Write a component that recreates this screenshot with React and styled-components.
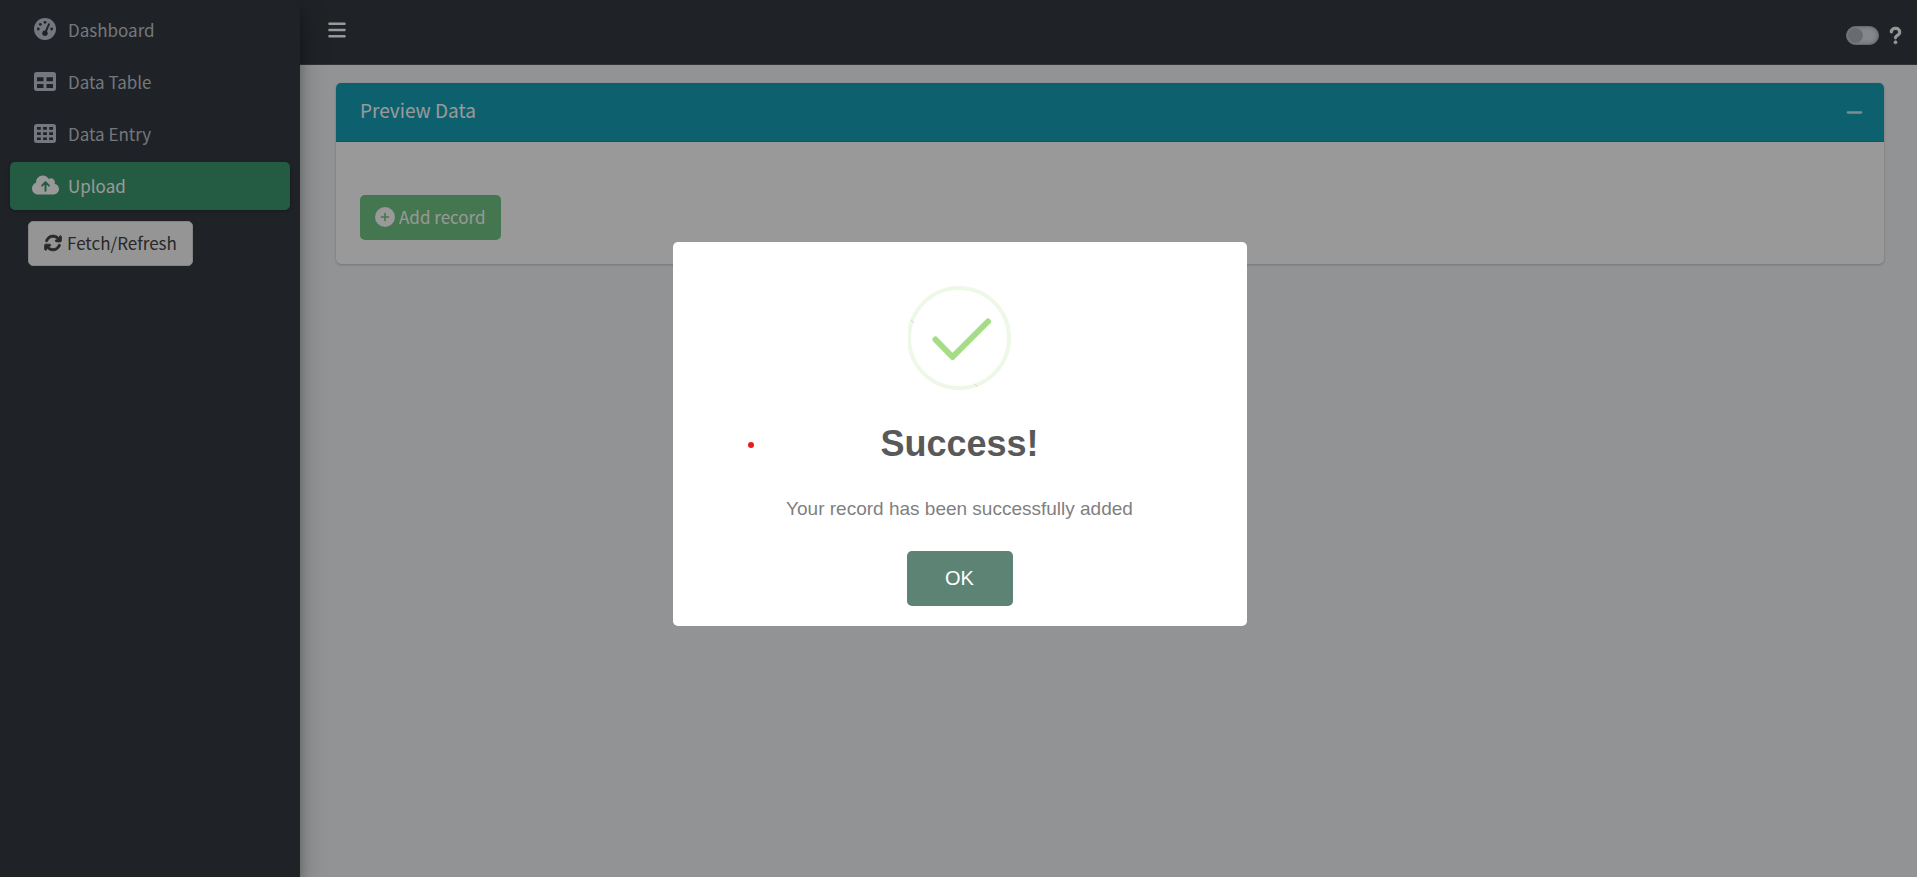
import React from 'react';
import styled, { createGlobalStyle, css } from 'styled-components';
import { FaArrowsRotate, FaBars, FaQuestion, FaMinus } from 'react-icons/fa6';

const GlobalStyle = createGlobalStyle`
  *, *::before, *::after { box-sizing: border-box; }
  body {
    margin: 0;
    background: #f4f6f9;
    color: #212529;
    font-family: "Source Sans Pro", "Noto Sans CJK SC", sans-serif;
    font-size: 17px;
    line-height: 28px;
  }
  button { font: inherit; cursor: pointer; }
  svg { display: block; flex: none; }
`;

const Shell = styled.div`
  display: flex;
  min-height: 100vh;
`;

const Sidebar = styled.aside`
  flex: 0 0 300px;
  z-index: 1;
  padding: 6px 10px;
  background: #343a40;
  box-shadow: 0 14px 28px rgba(0, 0, 0, 0.25), 0 10px 10px rgba(0, 0, 0, 0.22);
`;

const NavList = styled.ul`
  display: flex;
  flex-direction: column;
  gap: 4px;
  margin: 0 0 11px;
  padding: 0;
  list-style: none;
`;

const NavLink = styled.a`
  display: flex;
  align-items: center;
  gap: 7px;
  height: 48px;
  padding: 0 19px;
  border-radius: 5px;
  color: #c2c7d0;
  text-decoration: none;
  ${({ $active }) =>
    $active &&
    css`
      background: #3d9970;
      color: #fff;
      box-shadow: 0 1px 4px rgba(0, 0, 0, 0.24);
    `}
`;

const NavIcon = styled.span`
  display: flex;
  justify-content: center;
  width: 32px;
  padding-bottom: 2px;
`;

const Button = styled.button`
  display: inline-flex;
  align-items: center;
  gap: 4px;
  height: 45px;
  padding: 0 14px 2px;
  border: 1px solid transparent;
  border-radius: 5px;
`;

const RefreshButton = styled(Button)`
  gap: 5px;
  margin-left: 18px;
  padding: 0 15px 2px;
  border-color: #ddd;
  background: #f8f9fa;
  color: #444;
`;

const AddButton = styled(Button)`
  background: #28a745;
  color: #fff;
  opacity: 0.65;
`;

const Content = styled.div`
  flex: 1;
  min-width: 0;
`;

const TopBar = styled.header`
  display: flex;
  align-items: center;
  justify-content: space-between;
  height: 65px;
  padding: 0 12px 0 27px;
  border-bottom: 1px solid #4b545c;
  background: #343a40;
`;

const IconButton = styled.button`
  display: flex;
  padding: 0;
  border: 0;
  background: none;
  color: ${({ $color }) => $color || '#fff'};
`;

const MenuButton = styled(IconButton)`
  margin-bottom: 5px;
`;

const TopTools = styled.div`
  display: flex;
  align-items: center;
  gap: 7px;
  padding-top: 6px;
`;

const Switch = styled.input`
  appearance: none;
  display: flex;
  align-items: center;
  width: 33px;
  height: 19px;
  margin: 0;
  padding: 1px;
  border: 1px solid #adb5bd;
  border-radius: 10px;
  background: #dee2e6;
  box-shadow: inset 0 0 4px rgba(0, 0, 0, 0.25);

  &::before {
    content: '';
    width: 15px;
    height: 15px;
    border-radius: 50%;
    background: #adb5bd;
  }
`;

const Main = styled.main`
  padding: 18px 33px 18px 36px;
`;

const Card = styled.section`
  border-radius: 5px;
  background: #fff;
  box-shadow: 0 0 1px rgba(0, 0, 0, 0.125), 0 1px 3px rgba(0, 0, 0, 0.2);
`;

const CardHeader = styled.div`
  display: flex;
  align-items: center;
  justify-content: space-between;
  height: 59px;
  padding: 0 20px 0 24px;
  border-bottom: 1px solid #1591a5;
  border-radius: 5px 5px 0 0;
  background: #17a2b8;
  color: #fff;
`;

const CardTitle = styled.h3`
  margin: 0;
  padding-bottom: 4px;
  font-size: 19px;
  font-weight: 400;
`;

const CardBody = styled.div`
  display: flex;
  padding: 53px 24px 24px;
`;

const Backdrop = styled.div`
  position: fixed;
  inset: 0;
  z-index: 10;
  display: flex;
  align-items: center;
  justify-content: center;
  padding: 0 0 10px 2px;
  background: rgba(0, 0, 0, 0.4);
`;

const Dialog = styled.div`
  position: relative;
  display: flex;
  flex-direction: column;
  align-items: center;
  width: 574px;
  max-width: 100%;
  padding: 44px 20px 20px;
  border-radius: 5px;
  background: #fff;
  font-family: "Liberation Sans", Arial, sans-serif;
`;

const DialogTitle = styled.h2`
  margin: 32px 0 0;
  color: #595959;
  font-size: 36px;
  font-weight: 700;
  line-height: 44px;
`;

const DialogText = styled.p`
  margin: 32px 0 0;
  color: #7f7f7f;
  font-size: 19px;
  line-height: 22px;
`;

const ConfirmButton = styled.button`
  width: 106px;
  height: 55px;
  margin-top: 31px;
  border: 0;
  border-radius: 5px;
  background: #5c8374;
  color: #fff;
  font-size: 20px;
`;

const PointerDot = styled.span`
  position: absolute;
  top: 200px;
  left: 75px;
  width: 6px;
  height: 6px;
  border-radius: 50%;
  background: #e81c1c;
`;

function GaugeIcon() {
  return (
    <svg width="22" height="22" viewBox="0 0 22 22" aria-hidden="true">
      <circle cx="11" cy="11" r="11" fill="currentColor" />
      <g fill="#343a40">
        <circle cx="4.300" cy="11" r="1.400" />
        <circle cx="6.300" cy="6.300" r="1.400" />
        <circle cx="11" cy="4.300" r="1.400" />
        <circle cx="17.700" cy="11" r="1.400" />
        <circle cx="11" cy="15.200" r="2.700" />
      </g>
      <path d="M15 6.200L11.400 14.500" stroke="#343a40" strokeWidth="1.900" strokeLinecap="round" />
    </svg>
  );
}

function TableIcon() {
  return (
    <svg width="22" height="19" viewBox="0 0 22 19" fill="currentColor" aria-hidden="true">
      <path
        fillRule="evenodd"
        d="M2.750 0h16.500A2.750 2.750 0 0 1 22 2.750v13.500A2.750 2.750 0 0 1 19.250 19H2.750A2.750 2.750 0 0 1 0 16.250V2.750A2.750 2.750 0 0 1 2.750 0z
           M3 5.200v4h6.500v-4z M12.500 5.200v4H19v-4z M3 12v4h6.500v-4z M12.500 12v4H19v-4z"
      />
    </svg>
  );
}

function GridIcon() {
  return (
    <svg width="22" height="19" viewBox="0 0 22 19" fill="currentColor" aria-hidden="true">
      <path
        fillRule="evenodd"
        d="M2.750 0h16.500A2.750 2.750 0 0 1 22 2.750v13.500A2.750 2.750 0 0 1 19.250 19H2.750A2.750 2.750 0 0 1 0 16.250V2.750A2.750 2.750 0 0 1 2.750 0z
           M3 3v2.700h3.800V3z M9.100 3v2.700h3.800V3z M15.200 3v2.700H19V3z
           M3 8.200v2.700h3.800V8.200z M9.100 8.200v2.700h3.800V8.200z M15.200 8.200v2.700H19V8.200z
           M3 13.400v2.700h3.800v-2.700z M9.100 13.400v2.700h3.800v-2.700z M15.200 13.400v2.700H19v-2.700z"
      />
    </svg>
  );
}

function CloudUploadIcon() {
  return (
    <svg width="27" height="22" viewBox="0 0 640 512" aria-hidden="true">
      <path
        fill="currentColor"
        d="M0 336c0 79.500 64.500 144 144 144l368 0c70.700 0 128-57.300 128-128c0-61.900-44-113.600-102.400-125.400c4.100-10.700 6.400-22.400 6.400-34.600c0-53-43-96-96-96c-19.700 0-38.100 6-53.300 16.200C367 64.200 315.300 32 256 32C167.600 32 96 103.600 96 192c0 2.700 .1 5.400 .2 8.100C40.200 219.800 0 273.200 0 336z"
      />
      <path
        d="M320 392V190M238 270l82-82l82 82"
        fill="none"
        stroke="#3d9970"
        strokeWidth="46"
        strokeLinecap="round"
        strokeLinejoin="round"
      />
    </svg>
  );
}

function CirclePlusIcon() {
  return (
    <svg width="20" height="20" viewBox="0 0 20 20" aria-hidden="true">
      <circle cx="10" cy="10" r="10" fill="currentColor" />
      <path d="M10 6.500v7M6.500 10h7" stroke="#28a745" strokeWidth="1.600" strokeLinecap="round" />
    </svg>
  );
}

function SuccessIcon() {
  return (
    <svg width="104" height="104" viewBox="0 0 104 104" fill="none" aria-hidden="true">
      <circle cx="51" cy="52" r="50" stroke="#edf8e7" strokeWidth="4" />
      <path d="M3 34l3 3M67 98l3 3" stroke="#c5e9b3" strokeWidth="1" />
      <path
        d="M27.500 53.500L44.500 71L80 35.500"
        stroke="#a5dc86"
        strokeWidth="6"
        strokeLinecap="round"
        strokeLinejoin="round"
      />
    </svg>
  );
}

const NAV = [
  { label: 'Dashboard', Icon: GaugeIcon },
  { label: 'Data Table', Icon: TableIcon },
  { label: 'Data Entry', Icon: GridIcon },
  { label: 'Upload', Icon: CloudUploadIcon, active: true },
];

export default function App() {
  return (
    <>
      <GlobalStyle />
      <Shell>
        <Sidebar>
          <nav>
            <NavList>
              {NAV.map(({ label, Icon, active }) => (
                <li key={label}>
                  <NavLink href="#" $active={active}>
                    <NavIcon>
                      <Icon />
                    </NavIcon>
                    {label}
                  </NavLink>
                </li>
              ))}
            </NavList>
          </nav>
          <RefreshButton type="button">
            <FaArrowsRotate size={18} stroke="currentColor" strokeWidth={22} />
            Fetch/Refresh
          </RefreshButton>
        </Sidebar>
        <Content>
          <TopBar>
            <MenuButton type="button" aria-label="Toggle menu">
              <FaBars size={20} />
            </MenuButton>
            <TopTools>
              <Switch type="checkbox" aria-label="Dark mode" />
              <IconButton type="button" aria-label="Help">
                <FaQuestion size={19} stroke="currentColor" strokeWidth={24} />
              </IconButton>
            </TopTools>
          </TopBar>
          <Main>
            <Card>
              <CardHeader>
                <CardTitle>Preview Data</CardTitle>
                <IconButton type="button" aria-label="Collapse" $color="#d1ecf1">
                  <FaMinus size={19} />
                </IconButton>
              </CardHeader>
              <CardBody>
                <AddButton type="button">
                  <CirclePlusIcon />
                  Add record
                </AddButton>
              </CardBody>
            </Card>
          </Main>
        </Content>
      </Shell>
      <Backdrop>
        <Dialog role="dialog" aria-modal="true" aria-labelledby="dialog-title">
          <SuccessIcon />
          <DialogTitle id="dialog-title">Success!</DialogTitle>
          <DialogText>Your record has been successfully added</DialogText>
          <ConfirmButton type="button">OK</ConfirmButton>
          <PointerDot />
        </Dialog>
      </Backdrop>
    </>
  );
}
